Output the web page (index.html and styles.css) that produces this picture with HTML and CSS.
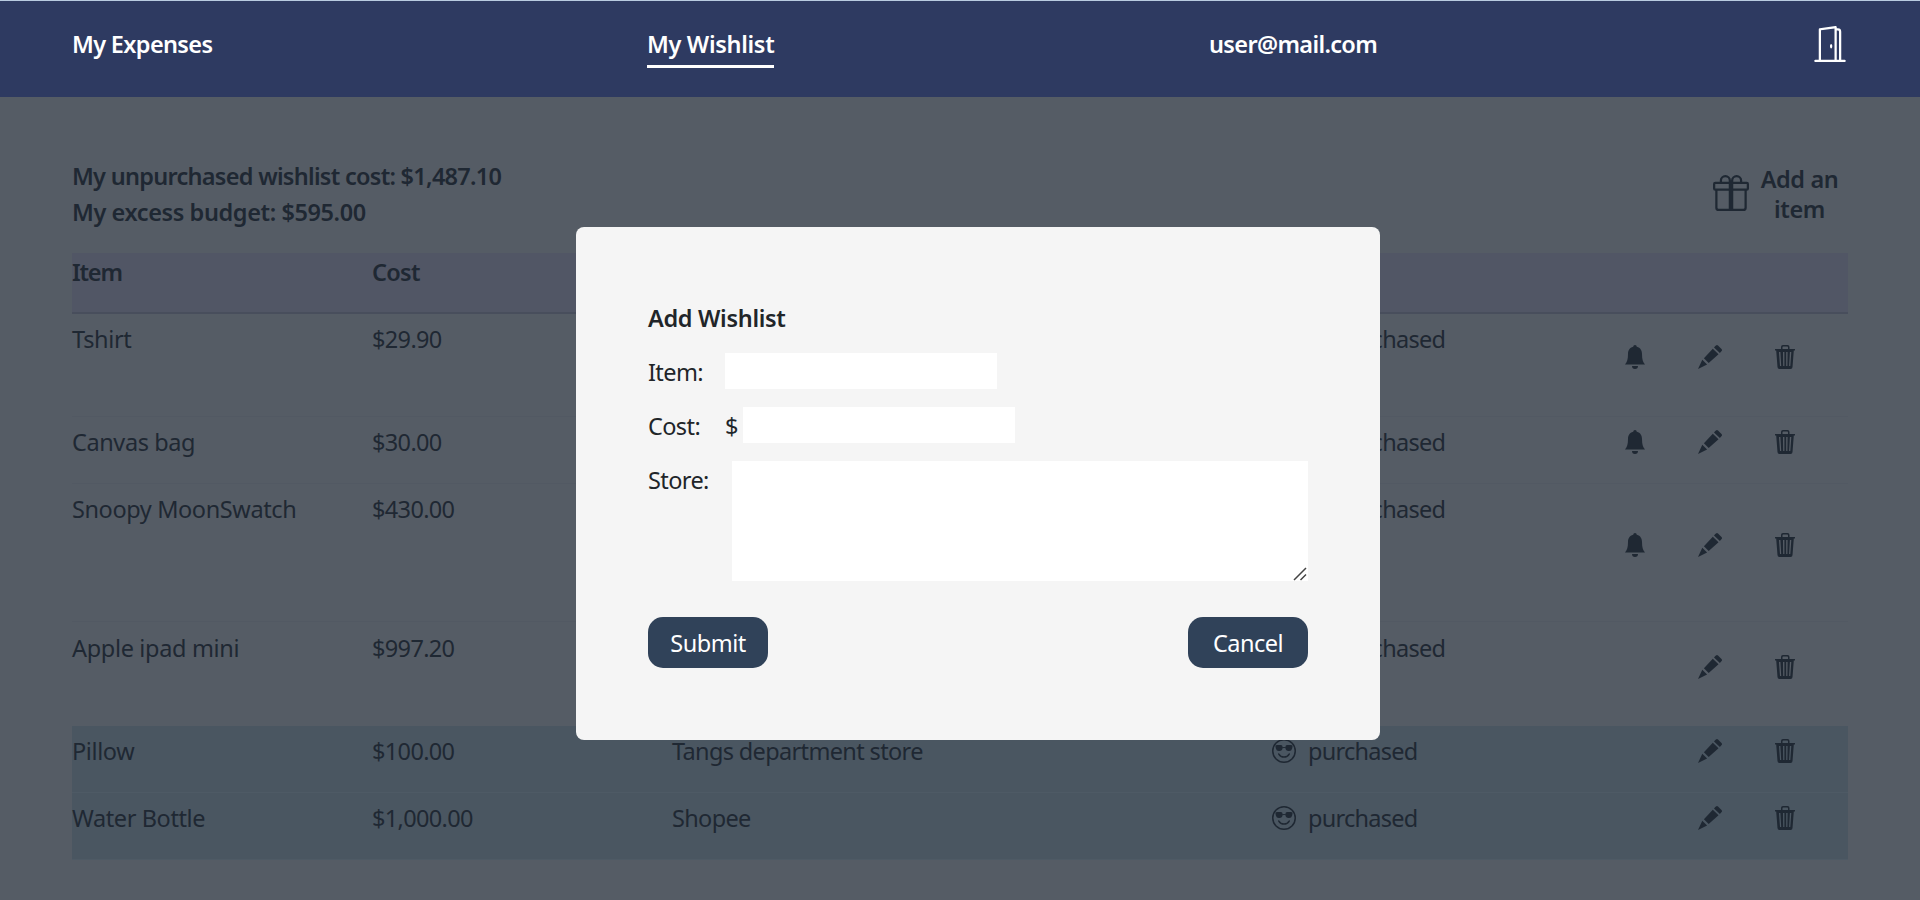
FILE: index.html
```
<!DOCTYPE html>
<html lang="en">
<head>
<meta charset="utf-8">
<title>My Wishlist</title>
<link rel="stylesheet" href="styles.css">
</head>
<body>
<svg class="sprite" width="0" height="0">
  <symbol id="bell" viewBox="0 0 24 24"><path d="M12 0a1.800 1.800 0 0 1 1.800 1.700C17.500 2.600 19 5.500 19 9c0 5 .8 8 3 10.500H2C4.200 17 5 14 5 9c0-3.500 1.500-6.400 5.200-7.300A1.800 1.800 0 0 1 12 0zM9 21h6a3 3 0 0 1-6 0z"/></symbol>
  <symbol id="pencil" viewBox="0 0 24 24"><path d="M17.300 1.100 18 .5a1.500 1.500 0 0 1 2 .1l3.500 3.500a1.500 1.500 0 0 1 .1 2l-1.700 1.900-5.900-5.600zM14.800 3.700l5.700 5.500L10.700 18l-4.800-4.800zM4.300 14.700l4.800 4.900L0 24z"/></symbol>
  <symbol id="trash" viewBox="0 0 24 24"><path fill-rule="evenodd" d="M8 4V2a2 2 0 0 1 2-2h4.500a2 2 0 0 1 2 2v2H22v1.500h-1.200L19.500 22a2 2 0 0 1-2 2h-11a2 2 0 0 1-2-2L3.200 5.500H2V4zm1.500 0H15V2.200a.7.7 0 0 0-.7-.7h-4.100a.7.7 0 0 0-.7.700zM6 7l1 14h1.200L7.400 7zM10 7l.2 14h1.200V7zM13.200 7v14h1.200l.2-14zM16.900 7l-.8 14h1.200l1-14z"/></symbol>
  <symbol id="cool" viewBox="0 0 16 16"><path d="M8 15A7 7 0 1 1 8 1a7 7 0 0 1 0 14m0 1A8 8 0 1 0 8 0a8 8 0 0 0 0 16"/><path d="M4.968 9.750a.5.5 0 1 0-.866.500A4.500 4.500 0 0 0 8 12.500a4.500 4.500 0 0 0 3.898-2.250.5.5 0 1 0-.866-.500A3.500 3.500 0 0 1 8 11.500a3.500 3.500 0 0 1-3.032-1.750M7 5.500V5a1 1 0 0 0-1-1H3.280a1 1 0 0 0-.97 1.243l.311 1.242A2 2 0 0 0 4.561 8H5a2 2 0 0 0 1.994-1.839A3 3 0 0 1 8 6c.393 0 .740.064 1.006.161A2 2 0 0 0 11 8h.438a2 2 0 0 0 1.940-1.515l.311-1.242A1 1 0 0 0 12.720 4H10a1 1 0 0 0-1 1v.500a4 4 0 0 0-2 0"/></symbol>
</svg>

<header class="navbar">
  <a class="nav-link nav-expenses">My Expenses</a>
  <a class="nav-link nav-wishlist active">My Wishlist</a>
  <a class="nav-link nav-user">user@mail.com</a>
  <svg class="door" viewBox="0 0 16 16"><path d="M8.500 10c-.276 0-.5-.448-.5-1s.224-1 .5-1 .5.448.5 1-.224 1-.5 1"/><path d="M10.828.122A.5.5 0 0 1 11 .500V1h.500A1.500 1.500 0 0 1 13 2.500V15h1.500a.5.5 0 0 1 0 1h-13a.5.5 0 0 1 0-1H3V1.500a.5.5 0 0 1 .430-.495l7-1a.5.5 0 0 1 .398.117M11.500 2H11v13h1V2.500a.5.5 0 0 0-.5-.5M4 1.934V15h6V1.077z"/></svg>
</header>

<main class="page">
  <section class="summary">
    <div class="totals">
      <div class="total-cost">My unpurchased wishlist cost: $1,487.10</div>
      <div class="total-budget">My excess budget: $595.00</div>
    </div>
    <div class="add">
      <svg class="gift" viewBox="0 0 16 16"><path d="M3 2.500a2.500 2.500 0 0 1 5 0 2.500 2.500 0 0 1 5 0v.006c0 .070 0 .270-.038.494H15a1 1 0 0 1 1 1v2a1 1 0 0 1-1 1v7.500a1.500 1.500 0 0 1-1.500 1.500h-11A1.500 1.500 0 0 1 1 14.500V7a1 1 0 0 1-1-1V4a1 1 0 0 1 1-1h2.038A3 3 0 0 1 3 2.506zm1.068.500H7v-.500a1.500 1.500 0 1 0-3 0c0 .085.002.274.045.430zM9 3h2.932l.023-.070c.043-.156.045-.345.045-.430a1.500 1.500 0 0 0-3 0zM1 4v2h6V4zm8 0v2h6V4zm5 3H9v8h4.500a.5.5 0 0 0 .5-.5zm-7 8V7H2v7.500a.5.5 0 0 0 .5.500z"/></svg>
      <div class="add-label">Add an item</div>
    </div>
  </section>

  <section class="table">
    <div class="row head"><div class="head-item">Item</div><div>Cost</div></div>
    <div class="row tall">
      <div>Tshirt</div><div class="money">$29.90</div><div></div>
      <div class="status"><svg class="icon"></svg><span>unpurchased</span></div>
      <div class="actions"><svg class="icon"><use href="#bell"/></svg><svg class="icon"><use href="#pencil"/></svg><svg class="icon"><use href="#trash"/></svg></div>
    </div>
    <div class="row">
      <div>Canvas bag</div><div class="money">$30.00</div><div></div>
      <div class="status"><svg class="icon"></svg><span>unpurchased</span></div>
      <div class="actions"><svg class="icon"><use href="#bell"/></svg><svg class="icon"><use href="#pencil"/></svg><svg class="icon"><use href="#trash"/></svg></div>
    </div>
    <div class="row taller">
      <div>Snoopy MoonSwatch</div><div class="money">$430.00</div><div></div>
      <div class="status"><svg class="icon"></svg><span>unpurchased</span></div>
      <div class="actions"><svg class="icon"><use href="#bell"/></svg><svg class="icon"><use href="#pencil"/></svg><svg class="icon"><use href="#trash"/></svg></div>
    </div>
    <div class="row tall last-open">
      <div>Apple ipad mini</div><div class="money">$997.20</div><div></div>
      <div class="status"><svg class="icon"></svg><span>unpurchased</span></div>
      <div class="actions"><svg class="icon"></svg><svg class="icon"><use href="#pencil"/></svg><svg class="icon"><use href="#trash"/></svg></div>
    </div>
    <div class="row bought">
      <div>Pillow</div><div class="money">$100.00</div><div class="store">Tangs department store</div>
      <div class="status"><svg class="icon"><use href="#cool"/></svg><span>purchased</span></div>
      <div class="actions"><svg class="icon"></svg><svg class="icon"><use href="#pencil"/></svg><svg class="icon"><use href="#trash"/></svg></div>
    </div>
    <div class="row bought">
      <div>Water Bottle</div><div class="money">$1,000.00</div><div class="store">Shopee</div>
      <div class="status"><svg class="icon"><use href="#cool"/></svg><span>purchased</span></div>
      <div class="actions"><svg class="icon"></svg><svg class="icon"><use href="#pencil"/></svg><svg class="icon"><use href="#trash"/></svg></div>
    </div>
  </section>
</main>

<form class="modal">
  <div class="modal-title">Add Wishlist</div>
  <div class="field"><label class="label">Item:</label><input class="input"></div>
  <div class="field"><label class="label">Cost:</label><span class="currency">$</span><input class="input"></div>
  <div class="field">
    <label class="label label-store">Store:</label>
    <div class="textarea-wrap">
      <textarea class="textarea"></textarea>
      <svg class="grip" viewBox="0 0 14 14"><path d="M1 13 13 1M7.500 13 13 7.500"/></svg>
    </div>
  </div>
  <div class="buttons"><button class="button" type="button">Submit</button><button class="button" type="button">Cancel</button></div>
</form>
</body>
</html>
```
FILE: styles.css
```
* { box-sizing: border-box; }
body {
  margin: 0;
  height: 900px;
  overflow: hidden;
  background: #555c65;
  color: #1f2833;
  font: 23.500px/36px "Noto Sans", "Open Sans", sans-serif;
  letter-spacing: -0.400px;
}
svg { fill: currentColor; flex: none; }
.sprite { position: absolute; }
.navbar {
  height: 97px;
  padding: 25px 72px 0;
  border-top: 1px solid #b9cbe0;
  background: #2e3a61;
  color: #fff;
  display: grid;
  grid-template-columns: 575px 562px 1fr 36px;
  align-items: start;
  font-weight: 600;
}
.nav-link { justify-self: start; height: 42px; line-height: 36px; white-space: nowrap; }
.nav-expenses, .nav-user { letter-spacing: -0.650px; }
.nav-wishlist { letter-spacing: -0.320px; }
.active { border-bottom: 3px solid #fff; }
.door { width: 36px; height: 36px; }
.page { padding: 61px 72px 0; }
.summary { height: 95px; display: flex; justify-content: space-between; font-weight: 600; }
.total-cost { letter-spacing: -0.720px; }
.add { width: 135px; padding-top: 6px; display: flex; }
.gift { width: 36px; height: 36px; margin-top: 11px; }
.add-label { width: 101px; padding: 0 5px 0 7px; line-height: 30px; text-align: center; }
.row {
  height: 67px;
  padding-top: 7px;
  border-bottom: 1px solid #525963;
  display: grid;
  grid-template-columns: 300px 300px 600px 313px 263px;
}
.head { height: 61px; padding-top: 1px; background: #515665; border-bottom: 2px solid #484e5c; font-weight: 600; letter-spacing: -0.700px; }
.head-item { letter-spacing: -1.200px; }
.money { letter-spacing: -0.650px; }
.store { letter-spacing: -0.650px; }
.tall { height: 103px; }
.taller { height: 138px; }
.last-open { height: 104px; padding-top: 8px; border-bottom: 0; letter-spacing: -0.330px; }
.bought { background: #4a5661; border-color: #4e5a65; }
.icon { width: 24px; height: 24px; }
.status { display: flex; gap: 12px; letter-spacing: -0.730px; }
.status .icon { margin-top: 6px; }
.actions { display: flex; gap: 51px; padding-left: 38px; align-self: center; margin-bottom: 23px; }
.modal {
  position: absolute;
  left: 576px;
  top: 227px;
  width: 804px;
  height: 513px;
  padding: 72px;
  border-radius: 8px;
  background: #f5f5f5;
  color: #212529;
  display: flex;
  flex-direction: column;
  gap: 18px;
}
.modal-title { height: 36px; padding-top: 1px; font-weight: 600; letter-spacing: -0.320px; }
.field { display: flex; }
.label, .currency { height: 36px; padding-top: 1px; letter-spacing: -0.600px; }
.label { width: 77px; }
.label-store { width: 84px; }
.currency { width: 18px; }
.input { width: 272px; height: 36px; border: 0; background: #fff; }
.textarea-wrap { position: relative; width: 576px; height: 120px; }
.textarea { display: block; width: 100%; height: 100%; border: 0; background: #fff; resize: none; }
.grip { position: absolute; right: 1px; bottom: 0; width: 14px; height: 14px; fill: none; stroke: #444; stroke-width: 1.500; }
.buttons { display: flex; justify-content: space-between; margin-top: 18px; }
.button {
  width: 120px;
  height: 51px;
  border: 0;
  border-radius: 15px;
  background: #304259;
  color: #fff;
  font: inherit;
  letter-spacing: -0.500px;
}
```
